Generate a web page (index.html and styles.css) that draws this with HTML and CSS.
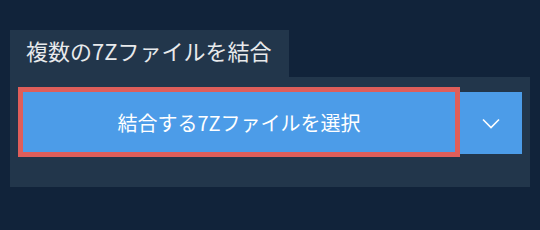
FILE: index.html
```html
<!doctype html>
<html lang="ja">
<head>
    <meta charset="UTF-8">
    <title>7Z結合</title>
    <link rel="stylesheet" href="styles.css">
</head>
<body>

<div class="merge">
    <div class="tab">複数の7Zファイルを結合</div>
    <div class="panel">
        <button class="btn-main">結合する7Zファイルを選択</button>
        <button class="btn-drop">
            <svg width="18" height="11" viewBox="0 0 18 11">
                <path d="M1 1.5 L9 9.5 L17 1.5" fill="none" stroke="#fff" stroke-width="1.6"/>
            </svg>
        </button>
    </div>
</div>

</body>
</html>
```

FILE: styles.css
```css
body {
    margin: 0;
    background: #11233a;
    font-family: "Noto Sans CJK JP", "Noto Sans", sans-serif;
}

.merge {
    padding: 30px 10px 0 10px;
    width: 520px;
}

.tab {
    display: inline-block;
    background: #22364b;
    color: #e8eaec;
    font-size: 22px;
    line-height: 40px;
    padding: 0 18px 7px 16px;
}

.panel {
    background: #22364b;
    display: flex;
    align-items: flex-start;
    padding: 15px 8px 33px 13px;
}

button {
    border: none;
    background: #4c9ce8;
    color: #fff;
    font-family: inherit;
    cursor: pointer;
    padding: 0;
}

.btn-main {
    width: 432px;
    height: 60px;
    font-size: 20px;
    outline: 5px solid #df5e5a;
}

.btn-drop {
    width: 62px;
    height: 62px;
    margin-left: 5px;
    display: flex;
    align-items: center;
    justify-content: center;
}
```
